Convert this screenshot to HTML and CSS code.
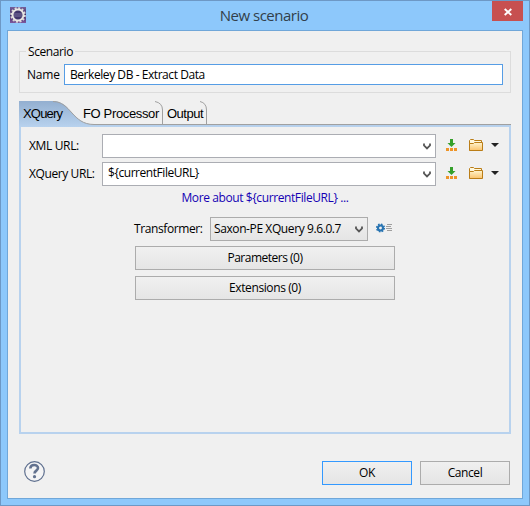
FILE: index.html
```html
<!DOCTYPE html>
<html lang="en">
<head>
<meta charset="utf-8">
<title>New scenario</title>
<link rel="stylesheet" href="styles.css">
</head>
<body>
<svg class="defs" width="0" height="0">
  <defs>
    <linearGradient id="folderFill" x1="0" y1="0" x2="0" y2="1"><stop offset="0" stop-color="#fff5cf"/><stop offset="1" stop-color="#fac36b"/></linearGradient>
    <linearGradient id="tabFill" x1="0" y1="0" x2="0" y2="1"><stop offset="0" stop-color="#93afd0"/><stop offset="1" stop-color="#b8d2ee"/></linearGradient>
    <linearGradient id="appFill" x1="0" y1="0" x2="0" y2="1"><stop offset="0" stop-color="#75609b"/><stop offset=".5" stop-color="#3d2c66"/><stop offset="1" stop-color="#7e599d"/></linearGradient>
    <symbol id="chevron" viewBox="0 0 8 7"><path d="M1 .5v2l3 3 3-3v-2" fill="none" stroke="#555" stroke-width="1.8"/></symbol>
    <symbol id="insert" viewBox="0 0 12 12"><path d="M4 0h3v4h2.500L5.500 8 1.500 4H4z" fill="#35a02b"/><path d="M0 9h3v3H0zM4 9h3v3H4zM8 9h3v3H8z" fill="#ee9428"/></symbol>
    <symbol id="folder" viewBox="0 0 14 12"><path d="M.5 11.500V1.500l1-1h3l1 1h7v2" fill="#fff8dd" stroke="#ba7d17"/><path d="M.5 4.500h4l1-1h8v8H.5z" fill="url(#folderFill)" stroke="#ba7d17"/></symbol>
  </defs>
</svg>
<div class="window">
  <header class="titlebar">
    <svg class="app" width="16" height="16" viewBox="0 0 16 16"><path d="M0 0h16v16H0z" fill="url(#appFill)"/><circle cx="8" cy="8" r="6.800" fill="none" stroke="#dcdad8" stroke-width="2" stroke-dasharray="2 1.560"/><circle cx="8" cy="8" r="5.500" fill="#40356b" stroke="#e8e6e3" stroke-width="2"/><path d="M4 7h8M4 9h8" stroke="#8c83ad" stroke-width=".8"/></svg>
    <h1>New scenario</h1>
    <button class="close" aria-label="Close"><svg width="8" height="8" viewBox="0 0 8 8"><path d="M.7 1l6.600 6M7.300 1L.7 7" stroke="#fff" stroke-width="1.900"/></svg></button>
  </header>
  <main class="client">
    <section class="scenario">
      <span class="legend">Scenario</span>
      <span class="name">Name</span>
      <div class="field"><span class="t-value">Berkeley DB - Extract Data</span></div>
    </section>
    <section class="tabs">
      <nav class="tabbar">
        <svg class="tabshape" width="492" height="26" viewBox="0 0 492 26"><path d="M0 0H34C52 0 53 23 75 23.500H492V26H0z" fill="url(#tabFill)"/><path d="M34 .5C52 .5 53 23.500 75 23.500H492M136 .5Q143.500 2 143.500 9V23M181 .5Q187.500 2 187.500 9V23" fill="none" stroke="#a0a0a0"/></svg>
        <span class="tab t-xq">XQuery</span><span class="tab t-fo">FO Processor</span><span class="tab t-out">Output</span>
      </nav>
      <div class="panel">
        <div class="row">
          <span class="label t-xml">XML URL:</span>
          <div class="combo"><svg width="8" height="7"><use href="#chevron"/></svg></div>
          <svg class="insert" width="12" height="12"><use href="#insert"/></svg>
          <svg class="folder" width="14" height="12"><use href="#folder"/></svg>
          <svg class="drop" width="8" height="4" viewBox="0 0 8 4"><path d="M0 0h8L4 4z" fill="#222"/></svg>
        </div>
        <div class="row">
          <span class="label t-xqurl">XQuery URL:</span>
          <div class="combo"><span class="t-cur">${currentFileURL}</span><svg width="8" height="7"><use href="#chevron"/></svg></div>
          <svg class="insert" width="12" height="12"><use href="#insert"/></svg>
          <svg class="folder" width="14" height="12"><use href="#folder"/></svg>
          <svg class="drop" width="8" height="4" viewBox="0 0 8 4"><path d="M0 0h8L4 4z" fill="#222"/></svg>
        </div>
        <a class="more">More about ${currentFileURL} ...</a>
        <div class="transform">
          <span class="t-trans">Transformer:</span>
          <div class="select"><span class="t-saxon">Saxon-PE XQuery 9.6.0.7</span><svg width="8" height="7"><use href="#chevron"/></svg></div>
          <svg class="gear" width="17" height="10" viewBox="0 0 17 10"><circle cx="4.500" cy="5" r="3.800" fill="none" stroke="#2874b2" stroke-width="1.500" stroke-dasharray="1.600 1.384"/><circle cx="4.500" cy="5" r="2.500" fill="#f0f0f0" stroke="#2874b2" stroke-width="2.100"/><path d="M11 1.500h5M10 3.500h5M10 5.500h6M11 7.500h5" stroke="#8a8a8a" stroke-width=".8"/></svg>
        </div>
        <button class="btn wide"><span class="t-param">Parameters (0)</span></button>
        <button class="btn wide"><span class="t-ext">Extensions (0)</span></button>
      </div>
    </section>
    <footer>
      <svg class="help" width="21" height="21" viewBox="0 0 21 21"><circle cx="10.500" cy="10.500" r="9.800" fill="#f4f4f5" stroke="#5f708f" stroke-width="1.200"/><path d="M6.300 7.500C6.500 3 14 3 14 7.100c0 2.600-3.500 2.500-3.500 5.400" fill="none" stroke="#63728f" stroke-width="2.600"/><circle cx="10.500" cy="15.700" r="1.600" fill="#63728f"/></svg>
      <button class="btn ok"><span class="t-ok">OK</span></button>
      <button class="btn"><span class="t-cancel">Cancel</span></button>
    </footer>
  </main>
</div>
</body>
</html>
```
FILE: styles.css
```css
* { box-sizing: border-box; }
body { margin: 0; font: 12px/16px "Open Sans", "Noto Sans", sans-serif; color: #000; letter-spacing: -.4px; white-space: nowrap; }
svg { display: block; flex: none; }
.defs { position: absolute; }
.window { width: 530px; height: 506px; background: #8dc8fb; border: 1px solid #6d98c5; padding: 0 6px 6px; display: flex; flex-direction: column; }
.titlebar { height: 29px; display: flex; align-items: flex-start; }
.app { margin: 6px 0 0 3px; }
h1 { flex: 1; margin: 4px 0 0; padding-left: 10px; text-align: center; font: 15px/20px "Open Sans", sans-serif; letter-spacing: -.5px; color: #323f4a; }
.close { width: 31px; height: 20px; border: 0; padding: 2px 0 0; background: #c75050; display: flex; align-items: center; justify-content: center; }
.client { width: 516px; height: 469px; border: 1px solid #70a7d9; background: #f0f0f0; padding: 20px 11px 0; }
.scenario { position: relative; height: 42px; border: 1px solid #dcdcdc; display: flex; padding: 12px 7px 0; align-items: flex-start; }
.legend { position: absolute; left: 6px; top: -8px; background: #f0f0f0; padding: 0 2px; }
.name { width: 37px; padding-top: 3px; }
.name { letter-spacing: -.2px; }
.legend { letter-spacing: -.4px; }
.field { width: 439px; height: 21px; border: 1px solid #569de5; background: #fff; padding: 2px 5px; }
.t-value { display: block; letter-spacing: -.44px; }
.tabs { margin-top: 8px; height: 333px; }
.tabbar { position: relative; height: 26px; display: flex; padding: 4px 0 0 4px; font: 13px/18px "Liberation Sans", sans-serif; letter-spacing: -.35px; }
.tabshape { position: absolute; left: 0; top: 0; }
.tab { position: relative; }
.t-xq { width: 60px; letter-spacing: -.8px; }
.t-fo { width: 84px; }
.t-out { letter-spacing: -.5px; }
.panel { height: 307px; border: solid #b8d2ee; border-width: 0 2px 2px; padding: 7px 6px 0 8px; }
.row { height: 24px; margin-bottom: 4px; display: flex; align-items: center; }
.label { width: 73px; }
.t-xml { letter-spacing: -.35px; }
.combo { width: 334px; height: 24px; border: 1px solid #abadb3; background: #fff; display: flex; align-items: center; padding: 0 4px 2px 5px; }
.combo svg { margin: 3px 0 0 auto; }
.select svg { margin: 1px 0 0 auto; }
.t-cur { letter-spacing: -.45px; }
.insert { margin-left: 10px; margin-bottom: 2px; }
.folder { margin: 0 8px 2px 11px; }
.drop { margin-bottom: 3px; }
.more { display: block; padding-right: 2px; text-align: center; color: #1400b4; }
.transform { display: flex; align-items: center; margin: 11px 0 5px 105px; height: 24px; }
.t-trans { width: 76px; }
.select { width: 158px; height: 24px; border: 1px solid #acacac; background: linear-gradient(#f0f0f0, #e5e5e5); display: flex; align-items: center; padding: 0 4px 1px 3px; }
.gear { margin-left: 8px; margin-bottom: 3px; }
.btn { width: 90px; height: 24px; border: 1px solid #acacac; background: linear-gradient(#f0f0f0, #e5e5e5); font: inherit; color: inherit; letter-spacing: inherit; padding: 0; }
.wide { display: block; width: 260px; margin: 0 0 6px 106px; letter-spacing: -.5px; }
.t-ext { letter-spacing: -.4px; }
footer { display: flex; margin: 27px 1px 0 0; height: 24px; align-items: flex-start; }
.help { margin-left: 5px; }
.ok { margin: 0 8px 0 auto; border-color: #3399ff; }
```
